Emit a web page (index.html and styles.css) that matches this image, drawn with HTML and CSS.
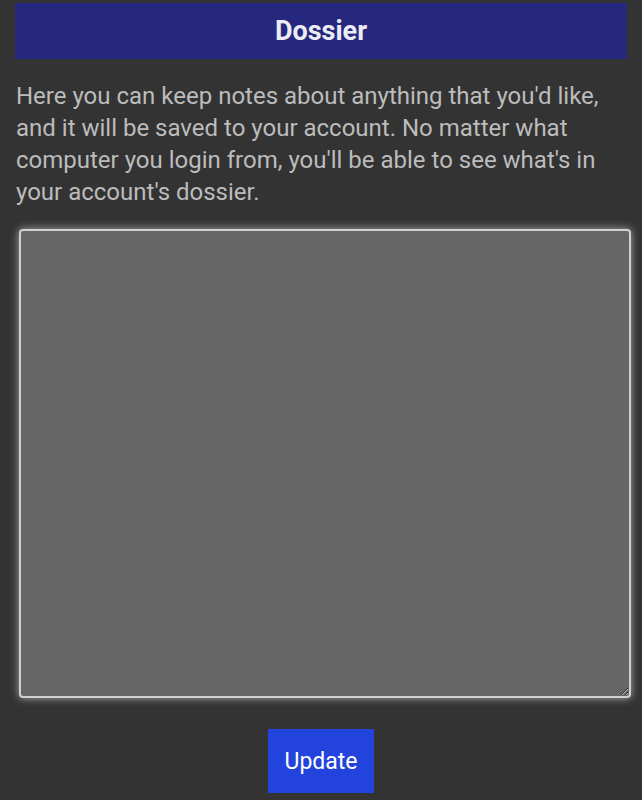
FILE: index.html
```html
<!DOCTYPE html>
<html lang="en">
<head>
    <meta charset="UTF-8">
    <title>Dossier</title>
    <link rel="stylesheet" href="styles.css">
</head>
<body>
    <!--제목-->
    <h1 class="mtit">Dossier</h1>

    <!--설명-->
    <p class="desc">Here you can keep notes about anything that you'd like, and it will be saved to your account. No matter what computer you login from, you'll be able to see what's in your account's dossier.</p>

    <!--메모-->
    <form class="dossier">
        <textarea class="notes"></textarea>
        <div class="btns">
            <button type="button" class="btn">Update</button>
        </div>
    </form>
</body>
</html>
```

FILE: styles.css
```css
html,
body,
h1,
p {
    margin: 0;
    padding: 0;
}

body {
    background-color: #333333;
    font-family: Roboto, "Liberation Sans", sans-serif;
    padding: 3px 15px 0 15px;
}

/*타이틀*/
.mtit {
    background-color: #26287f;
    color: #ececf4;
    text-align: center;
    font-size: 27px;
    font-weight: 700;
    height: 56px;
    line-height: 56px;
}

/*설명*/
.desc {
    margin-top: 21px;
    padding-left: 1px;
    color: #bcbcbc;
    font-size: 24px;
    line-height: 32px;
}

/*메모*/
.dossier {
    margin-top: 21px;
}

.notes {
    display: block;
    box-sizing: border-box;
    width: 612px;
    height: 469px;
    margin-left: 4px;
    background-color: #666666;
    border: 2px solid #d0d0d0;
    border-radius: 4px;
    box-shadow: 0 0 8px rgba(255, 255, 255, .6);
    resize: vertical;
}

.btns {
    display: flex;
    justify-content: center;
    margin-top: 31px;
}

.btn {
    width: 106px;
    height: 64px;
    border: none;
    background-color: #2244dd;
    color: #fff;
    font-family: Roboto, "Liberation Sans", sans-serif;
    font-size: 23px;
}
```
